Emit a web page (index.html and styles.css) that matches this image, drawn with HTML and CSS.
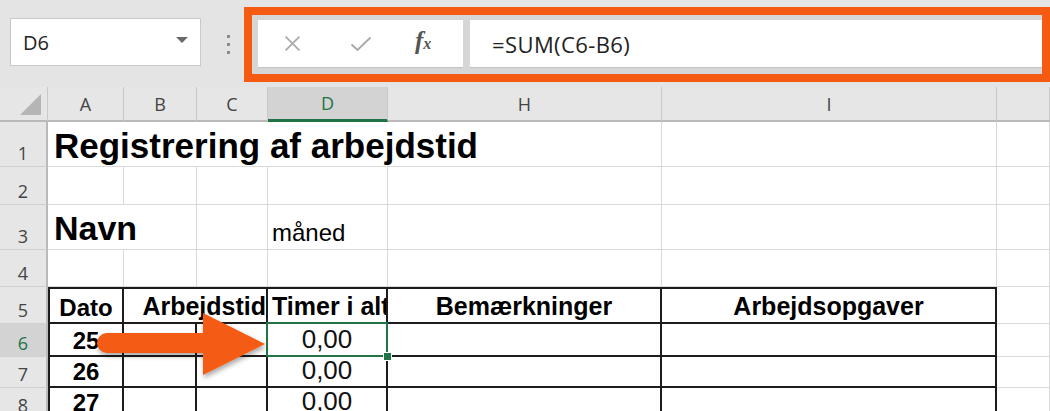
FILE: index.html
```html
<!DOCTYPE html>
<html lang="da">
<head>
<meta charset="utf-8">
<title>Excel formel</title>
<link rel="stylesheet" href="styles.css">
</head>
<body>
<div class="toolbar">
  <div class="namebox"><span class="nb-text">D6</span><span class="caret"></span></div>
  <div class="grip"><i></i><i></i><i></i></div>
  <div class="callout">
    <div class="fbtns">
      <svg class="ico ico-x" viewBox="0 0 16 16" width="17" height="17"><path d="M1.5 1.5 L14.5 14.5 M14.5 1.5 L1.5 14.5" stroke="#a9a9a9" stroke-width="1.6" fill="none"/></svg>
      <svg class="ico ico-check" viewBox="0 0 22 16" width="22" height="16"><path d="M1.5 8.5 L7.5 14 L20.5 1.5" stroke="#a9a9a9" stroke-width="1.9" fill="none"/></svg>
      <span class="fx">f<span class="fx-x">x</span></span>
    </div>
    <div class="finput">=SUM(C6-B6)</div>
  </div>
</div>

<div class="sheet">
  <!-- header row -->
  <div class="hd corner"><span class="tri"></span></div>
  <div class="hd col">A</div>
  <div class="hd col">B</div>
  <div class="hd col">C</div>
  <div class="hd col sel">D</div>
  <div class="hd col">H</div>
  <div class="hd col">I</div>
  <div class="hd col"></div>

  <!-- row 1 -->
  <div class="hd row">1</div>
  <div class="c span5 title">Registrering af arbejdstid</div>
  <div class="c"></div>
  <div class="c"></div>

  <!-- row 2 -->
  <div class="hd row">2</div>
  <div class="c"></div><div class="c"></div><div class="c"></div><div class="c"></div><div class="c"></div><div class="c"></div><div class="c"></div>

  <!-- row 3 -->
  <div class="hd row">3</div>
  <div class="c span2 name">Navn</div>
  <div class="c"></div>
  <div class="c small">måned</div>
  <div class="c"></div><div class="c"></div><div class="c"></div>

  <!-- row 4 -->
  <div class="hd row">4</div>
  <div class="c"></div><div class="c"></div><div class="c"></div><div class="c"></div><div class="c"></div><div class="c"></div><div class="c"></div>

  <!-- row 5 -->
  <div class="hd row">5</div>
  <div class="c t top left bold center">Dato</div>
  <div class="c t top span2 bold right">Arbejdstid</div>
  <div class="c t top bold">Timer i alt</div>
  <div class="c t top bold center">Bemærkninger</div>
  <div class="c t top bold center">Arbejdsopgaver</div>
  <div class="c"></div>

  <!-- row 6 -->
  <div class="hd row sel">6</div>
  <div class="c t left bold center ghost">25</div>
  <div class="c t"></div>
  <div class="c t"></div>
  <div class="c t num active">0,00<span class="handle"></span></div>
  <div class="c t"></div>
  <div class="c t"></div>
  <div class="c"></div>

  <!-- row 7 -->
  <div class="hd row">7</div>
  <div class="c t left bold center">26</div>
  <div class="c t"></div>
  <div class="c t"></div>
  <div class="c t num">0,00</div>
  <div class="c t"></div>
  <div class="c t"></div>
  <div class="c"></div>

  <!-- row 8 -->
  <div class="hd row">8</div>
  <div class="c t left bold center">27</div>
  <div class="c t"></div>
  <div class="c t"></div>
  <div class="c t num">0,00</div>
  <div class="c t"></div>
  <div class="c t"></div>
  <div class="c"></div>
</div>

<svg class="arrow" viewBox="0 0 190 80" width="190" height="80">
  <defs>
    <filter id="sh" x="-10%" y="-20%" width="130%" height="150%">
      <feDropShadow dx="1" dy="3" stdDeviation="2.5" flood-color="#000" flood-opacity="0.35"/>
    </filter>
  </defs>
  <path filter="url(#sh)" d="M17 20 H113 V0 L175 31 L113 62 V40 H17 A10 10 0 0 1 17 20 Z" fill="#f45b14"/>
</svg>
</body>
</html>
```

FILE: styles.css
```css
html, body {
  margin: 0;
  padding: 0;
}
body {
  width: 1050px;
  height: 411px;
  overflow: hidden;
  position: relative;
  background: #e6e6e6;
  font-family: "Liberation Sans", Arial, sans-serif;
  color: #000;
}

/* ---------- toolbar ---------- */
.toolbar {
  height: 87px;
  box-sizing: border-box;
  padding: 7px 0 0 10px;
  display: flex;
  align-items: flex-start;
  background: #e4e4e4;
}
.namebox {
  margin-top: 11px;
  width: 191px;
  height: 48px;
  box-sizing: border-box;
  background: #fff;
  border: 1px solid #c8c8c8;
  display: flex;
  align-items: center;
  justify-content: space-between;
  padding: 0 12px 0 12px;
}
.nb-text {
  font-family: "Open Sans", sans-serif;
  font-size: 20px;
  color: #222;
}
.caret {
  width: 0;
  height: 0;
  border-left: 6px solid transparent;
  border-right: 6px solid transparent;
  border-top: 6px solid #6a6a6a;
  margin-bottom: 5px;
}
.grip {
  margin: 28px 0 0 26px;
  width: 3px;
  display: flex;
  flex-direction: column;
  gap: 5px;
}
.grip i {
  display: block;
  width: 3px;
  height: 3px;
  background: #8a8a8a;
}
.callout {
  margin-left: 14px;
  width: 806px;
  height: 75px;
  box-sizing: border-box;
  border: 8px solid #f55a12;
  background: #d6d6d6;
  padding: 5px 0 6px 6px;
  display: flex;
  gap: 7px;
}
.fbtns {
  width: 205px;
  background: #fff;
  border-bottom: 1px solid #c4c4c4;
  display: flex;
  align-items: center;
  padding-left: 26px;
  box-sizing: border-box;
}
.ico-x { margin-right: 49px; }
.ico-check { margin-right: 43px; }
.fx {
  font-family: "Liberation Serif", serif;
  font-style: italic;
  font-weight: bold;
  font-size: 25px;
  color: #555;
  margin-top: -6px;
}
.fx-x {
  font-size: 16px;
  font-weight: bold;
}
.finput {
  flex: 1;
  background: #fff;
  border-bottom: 1px solid #c4c4c4;
  display: flex;
  align-items: center;
  padding-left: 22px;
  font-family: "Open Sans", sans-serif;
  font-size: 22px;
  color: #222;
  letter-spacing: 0.4px;
}

/* ---------- sheet ---------- */
.sheet {
  display: grid;
  grid-template-columns: 48px 76px 73px 71px 120px 274px 335px 53px;
  grid-template-rows: 35px 45px 38px 45px 37px 37px 33px 31px 31px;
  background: #fff;
}
.hd {
  background: #e6e6e6;
  font-family: "Open Sans", sans-serif;
  font-size: 18px;
  color: #444;
  box-sizing: border-box;
  display: flex;
  align-items: center;
  justify-content: center;
}
.hd.col {
  border-right: 1px solid #c9c9c9;
  border-bottom: 2px solid #b9b9b9;
}
.hd.corner {
  border-right: 1px solid #c9c9c9;
  border-bottom: 2px solid #b9b9b9;
  position: relative;
}
.tri {
  position: absolute;
  right: 6px;
  bottom: 5px;
  width: 0;
  height: 0;
  border-left: 21px solid transparent;
  border-bottom: 21px solid #b5b5b5;
}
.hd.row {
  border-right: 2px solid #b9b9b9;
  border-bottom: 1px solid #d0d0d0;
  align-items: flex-end;
  padding-bottom: 1px;
}
.hd.col.sel {
  background: #d3d3d3;
  border-bottom: 3px solid #217346;
  color: #217346;
}
.hd.row.sel {
  background: #d3d3d3;
  color: #217346;
}

.c {
  box-sizing: border-box;
  border-right: 1px solid #d9d9d9;
  border-bottom: 1px solid #d9d9d9;
  display: flex;
  align-items: flex-end;
  padding: 0 4px 4px 4px;
  white-space: nowrap;
  overflow: hidden;
  position: relative;
  font-size: 25px;
}
.span5 { grid-column: span 5; }
.span2 { grid-column: span 2; }

.title {
  font-weight: bold;
  font-size: 35px;
  padding-left: 6px;
  padding-bottom: 0;
}
.name {
  font-weight: bold;
  font-size: 34px;
  padding-left: 6px;
  padding-bottom: 1px;
}
.small {
  font-size: 24px;
  padding-bottom: 2px;
}

.t {
  border-right: 2px solid #1c1c1c;
  border-bottom: 2px solid #1c1c1c;
}
.t.top { border-top: 2px solid #1c1c1c; }
.t.left { border-left: 2px solid #1c1c1c; }
.bold { font-weight: bold; }
.center { justify-content: center; }
.right { justify-content: flex-end; padding-right: 0; }
.num {
  justify-content: center;
  font-size: 26px;
  padding-bottom: 0;
  color: #111;
  overflow: visible;
}
.c.t.bold { padding-bottom: 1px; }
.c.t.left.bold { padding-bottom: 0; font-size: 24px; }

.active::after {
  content: "";
  position: absolute;
  left: -2px;
  top: -2px;
  right: -2px;
  bottom: -2px;
  border: 2px solid #217346;
  pointer-events: none;
}
.handle {
  position: absolute;
  right: -6px;
  bottom: -6px;
  width: 7px;
  height: 7px;
  background: #217346;
  border: 1px solid #fff;
  z-index: 2;
}
.ghost::after {
  content: "";
  position: absolute;
  left: -4px;
  top: -2px;
  right: -2px;
  bottom: -2px;
  border: 2px solid #217346;
  border-right: none;
  pointer-events: none;
}

/* ---------- overlay arrow ---------- */
.arrow {
  position: absolute;
  left: 90px;
  top: 313px;
}
```
